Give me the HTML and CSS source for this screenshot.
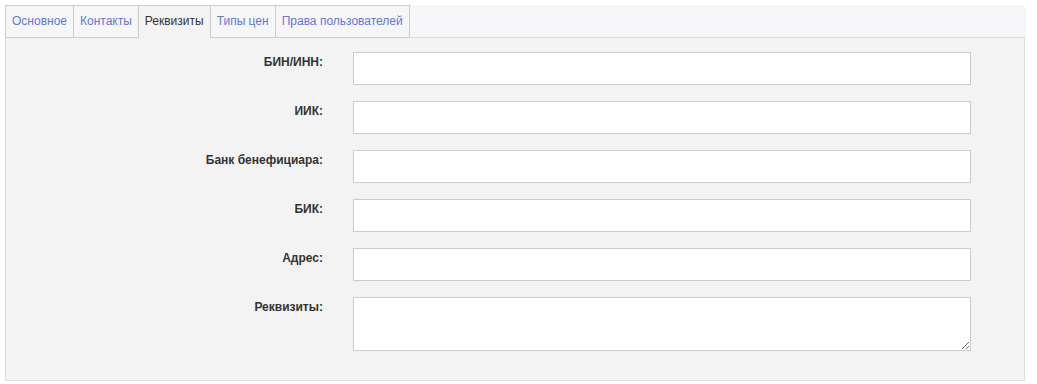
FILE: index.html
```html
<!DOCTYPE html>
<html lang="ru">
<head>
<meta charset="utf-8">
<link rel="stylesheet" href="styles.css">
</head>
<body>
<div class="wrap">
  <div class="tabs">
    <a class="tab">Основное</a>
    <a class="tab">Контакты</a>
    <a class="tab active">Реквизиты</a>
    <a class="tab">Типы цен</a>
    <a class="tab">Права пользователей</a>
  </div>
  <div class="panel">
    <div class="row"><label class="lbl">БИН/ИНН:</label><input class="field" type="text"></div>
    <div class="row"><label class="lbl">ИИК:</label><input class="field" type="text"></div>
    <div class="row"><label class="lbl">Банк бенефициара:</label><input class="field" type="text"></div>
    <div class="row"><label class="lbl">БИК:</label><input class="field" type="text"></div>
    <div class="row"><label class="lbl">Адрес:</label><input class="field" type="text"></div>
    <div class="row"><label class="lbl">Реквизиты:</label><textarea class="field area"></textarea></div>
  </div>
</div>
</body>
</html>
```
FILE: styles.css
```css
html, body { margin: 0; padding: 0; background: #fff; }
body { font-family: "Liberation Sans", Arial, sans-serif; font-size: 12px; color: #333; }
.wrap { padding: 5px 0 0 5px; width: 1021px; }
.tabs {
  display: flex;
  background: #f6f6f8;
  border-top-right-radius: 5px;
  height: 33px;
  width: 1021px;
}
.tab {
  display: block;
  box-sizing: border-box;
  height: 33px;
  padding: 0 6px 0 6px;
  line-height: 31px;
  border: 1px solid #cccccc;
  border-left-width: 0;
  color: #6477d6;
  background: #f6f6f8;
  cursor: pointer;
  position: relative;
  z-index: 1;
}
.tab:first-child { border-left-width: 1px; }
.tab.active { color: #333; background: #f3f3f3; border-bottom-color: #f3f3f3; }
.panel {
  box-sizing: border-box;
  width: 1020px;
  height: 344px;
  margin-top: -1px;
  border: 1px solid #dddddd;
  background: #f3f3f3;
  padding: 14px 0 0 0;
  display: flex;
  flex-direction: column;
  gap: 16px;
}
.row { display: grid; grid-template-columns: 317px 618px; column-gap: 30px; align-items: start; }
.lbl { text-align: right; font-weight: bold; padding-top: 3px; line-height: 15px; color: #333; }
.field {
  box-sizing: border-box;
  height: 33px;
  width: 618px;
  margin: 0;
  border: 1px solid #cccccc;
  background: #fff;
  border-radius: 0;
  outline: none;
  font: inherit;
  padding: 4px 6px;
}
.area { height: 54px; resize: vertical; display: block; }
```
